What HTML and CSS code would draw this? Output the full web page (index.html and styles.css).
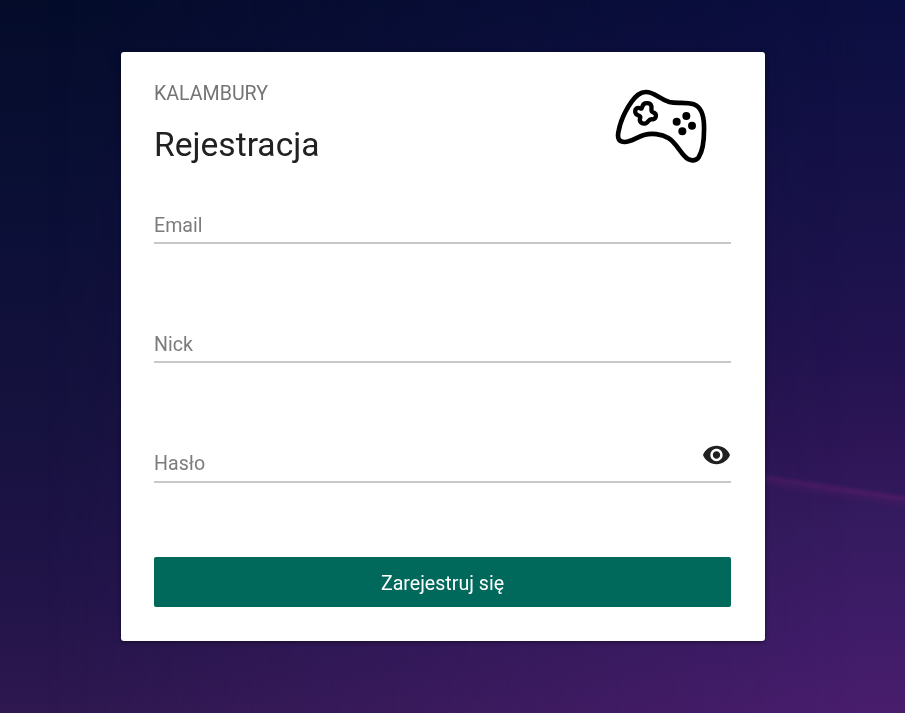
FILE: index.html
```html
<!DOCTYPE html>
<html lang="pl">
<head>
<meta charset="utf-8">
<title>Rejestracja</title>
<link rel="stylesheet" href="styles.css">
</head>
<body>
<main class="page">
  <form class="card">
    <header class="header">
      <div>
        <div class="brand">KALAMBURY</div>
        <h1 class="title">Rejestracja</h1>
      </div>
      <svg class="logo" viewBox="0 0 375 300" fill="none" stroke="#000" stroke-width="14" stroke-linejoin="round">
        <path d="M138 51C162 51 179 72 208 81C233 87 254 79 282 88C304 96 311 119 312 151C313 188 310 225 296 247C286 260 267 259 254 244C237 225 225 201 205 189C184 176 154 174 132 180C111 186 94 200 74 201C56 201 52 190 55 172C61 138 75 108 95 80C108 62 119 51 138 51Z"/>
        <path stroke-width="13" d="M127 95C130 81 151 82 154 93C156 103 151 109 159 112C173 116 169 133 156 133C145 131 147 142 137 145C124 148 116 139 121 128C122 120 109 124 106 113C104 101 112 96 121 100C126 103 125 99 127 95Z"/>
        <g fill="#000" stroke="none"><circle cx="259" cy="123" r="12"/><circle cx="230" cy="140" r="12"/><circle cx="276" cy="152" r="12"/><circle cx="247" cy="169" r="12"/></g>
      </svg>
    </header>
    <div class="fields">
      <label class="field">Email</label>
      <label class="field">Nick</label>
      <label class="field last">Hasło
        <svg class="eye" viewBox="1 4 22 16"><path fill="#212121" d="M12 4.5C7 4.5 2.73 7.61 1 12c1.73 4.39 6 7.5 11 7.5s9.27-3.11 11-7.5c-1.73-4.39-6-7.5-11-7.5zM12 17c-2.76 0-5-2.24-5-5s2.24-5 5-5 5 2.24 5 5-2.24 5-5 5zm0-8c-1.66 0-3 1.34-3 3s1.34 3 3 3 3-1.34 3-3-1.34-3-3-3z"/></svg>
      </label>
    </div>
    <button class="submit" type="button">Zarejestruj się</button>
  </form>
</main>
</body>
</html>
```
FILE: styles.css
```css
* { box-sizing: border-box; }
body { margin: 0; font-family: Roboto, sans-serif; }
.page {
  position: relative;
  z-index: 0;
  height: 713px;
  padding: 51.5px 140px 0 121px;
  overflow: hidden;
  background: linear-gradient(#040c2a 0, #0b0f36 30%, #16123f 60%, #221449 85%, #2e184f 100%);
}
/* Brighter right side of the night sky, fading out towards the left */
.page::before {
  content: "";
  position: absolute;
  z-index: -1;
  inset: 0;
  background:
    linear-gradient(188.5deg, transparent 36%, rgba(105, 30, 112, .42) 44%, rgba(95, 30, 108, .22) 50%, transparent 60%) 765px 470px / 140px 45px no-repeat,
    linear-gradient(#0b0e40 0, #181249 30%, #231350 50%, #2d1556 62%, #361b60 75%, #3f1c68 88%, #481d6c 100%);
  mask-image: linear-gradient(to right, transparent 5%, #000 95%);
}
.card {
  height: 589px;
  padding: 0 34px 0 33px;
  background: #fff;
  border-radius: 3px;
  box-shadow: 0 1px 4px rgba(0, 0, 0, .5);
  transform: translateZ(0);
}
.header { display: flex; justify-content: space-between; height: 151px; }
.brand { margin-top: 30.5px; font-size: 19.6px; line-height: 24px; color: #757575; }
.title { margin: 18.5px 0 0; font-size: 33.6px; line-height: 40px; font-weight: 400; color: #212121; }
.logo { width: 125px; height: 100px; margin: 23.5px 6px 0 0; }
.field {
  display: flex;
  justify-content: space-between;
  height: 41.5px;
  margin-bottom: 77.7px;
  padding-top: 11px;
  border-bottom: 2px solid #c8c8c8;
  font-size: 19.6px;
  line-height: 24px;
  color: #7c7c7c;
}
.last { height: 42.1px; margin-bottom: 74.5px; }
.eye { width: 27px; height: 20px; margin: -7px 1.5px 0 0; }
.submit {
  display: block;
  width: 100%;
  height: 50px;
  padding: 2px 0 0;
  border: 0;
  border-radius: 2px;
  background: #00695c;
  color: #fff;
  font: 400 19.6px Roboto, sans-serif;
}
```
